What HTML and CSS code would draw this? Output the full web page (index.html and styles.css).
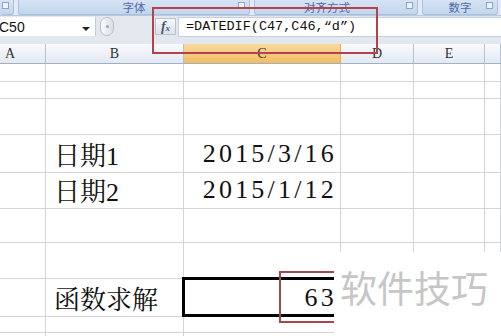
FILE: index.html
```html
<!DOCTYPE html>
<html lang="zh-CN">
<head>
<meta charset="utf-8">
<title>DATEDIF</title>
<link rel="stylesheet" href="styles.css">
</head>
<body>
<div class="screen">

	<div class="ribbon">
		<div class="group g-prev"><span class="launch"></span></div>
		<div class="group g-font"><span class="label">字体</span><span class="launch"></span></div>
		<div class="group g-align"><span class="label">对齐方式</span><span class="launch"></span></div>
		<div class="group g-num"><span class="label">数字</span><span class="launch"></span></div>
	</div>

	<div class="fbar">
		<div class="namebox"><span class="ref">C50</span><span class="arrow"></span></div>
		<div class="splitter"><span></span></div>
		<div class="fx"><i>f</i><i class="x">x</i></div>
		<div class="formula">=DATEDIF(C47,C46,“d”)</div>
	</div>

	<div class="sheet">
		<div class="row head">
			<div class="cell">A</div><div class="cell">B</div><div class="cell on">C</div><div class="cell">D</div><div class="cell">E</div><div class="cell"></div>
		</div>
		<div class="row r18">
			<div class="cell"></div><div class="cell"></div><div class="cell"></div><div class="cell"></div><div class="cell"></div><div class="cell"></div>
		</div>
		<div class="row r17">
			<div class="cell"></div><div class="cell"></div><div class="cell"></div><div class="cell"></div><div class="cell"></div><div class="cell"></div>
		</div>
		<div class="row r36">
			<div class="cell"></div><div class="cell"></div><div class="cell"></div><div class="cell"></div><div class="cell"></div><div class="cell"></div>
		</div>
		<div class="row r36">
			<div class="cell"></div><div class="cell txt">日期1</div><div class="cell num">2015/3/16</div><div class="cell"></div><div class="cell"></div><div class="cell"></div>
		</div>
		<div class="row r36">
			<div class="cell"></div><div class="cell txt">日期2</div><div class="cell num">2015/1/12</div><div class="cell"></div><div class="cell"></div><div class="cell"></div>
		</div>
		<div class="row r36">
			<div class="cell"></div><div class="cell"></div><div class="cell"></div><div class="cell"></div><div class="cell"></div><div class="cell"></div>
		</div>
		<div class="row r36">
			<div class="cell"></div><div class="cell"></div><div class="cell"></div><div class="cell"></div><div class="cell"></div><div class="cell"></div>
		</div>
		<div class="row r36">
			<div class="cell"></div><div class="cell txt">函数求解</div><div class="cell num sel">63</div><div class="cell"></div><div class="cell"></div><div class="cell"></div>
		</div>
		<div class="row r18">
			<div class="cell"></div><div class="cell"></div><div class="cell"></div><div class="cell"></div><div class="cell"></div><div class="cell"></div>
		</div>
		<div class="row rest">
			<div class="cell"></div><div class="cell"></div><div class="cell"></div><div class="cell"></div><div class="cell"></div><div class="cell"></div>
		</div>
	</div>

	<!-- red marks drawn over the screenshot -->
	<div class="mark mark-top"></div>
	<div class="mark mark-bottom"></div>

	<div class="watermark"><span>软件技巧</span></div>
</div>
</body>
</html>
```

FILE: styles.css
```css
* {
    box-sizing: border-box;
}
body {
    margin: 0;
    background: #fff;
}
.screen {
    position: relative;
    width: 501px;
    height: 336px;
    overflow: hidden;
    background: #fff;
}

/* ribbon group labels */
.ribbon {
    display: flex;
    gap: 4px;
    height: 16px;
    background: #e2eaf5;
    border-bottom: 1px solid #b9c9dd;
}
.group {
    position: relative;
    height: 15px;
    background: linear-gradient(#d6e3f3, #c3d6ee);
    border: 1px solid #a9bfdb;
    border-top: none;
    border-radius: 0 0 3px 3px;
    text-align: center;
}
.g-prev { width: 14px; border-left: none; }
.g-font { width: 232px; }
.g-align { width: 164px; }
.g-num { width: 76px; }
.label {
    display: block;
    margin-top: 1px;
    font: 11.5px/13px "Noto Sans CJK SC", sans-serif;
    color: #5069a6;
}
.g-align .label { padding-right: 18px; }
.launch {
    position: absolute;
    right: 4px;
    top: 2px;
    width: 7px;
    height: 7px;
    border: 1px solid #8ea6c6;
    background: #eef3f9;
}
.g-prev .launch { right: auto; left: 2px; }

/* formula bar */
.fbar {
    display: flex;
    align-items: flex-start;
    height: 28px;
    padding-top: 1px;
    background: #e3e8ef;
}
.namebox {
    display: flex;
    align-items: center;
    width: 96px;
    height: 19px;
    background: #fff;
    border-right: 1px solid #c3cedb;
}
.ref {
    margin-left: -1px;
    font: 14px "Liberation Sans", sans-serif;
    color: #111;
}
.arrow {
    margin: 4px 5px 0 auto;
    border-top: 4px solid #222;
    border-left: 4px solid transparent;
    border-right: 4px solid transparent;
}
.splitter {
    display: flex;
    align-items: center;
    justify-content: center;
    width: 14px;
    height: 19px;
    margin-left: 4px;
    border: 1px solid #b6c1ce;
    border-radius: 7px;
    background: linear-gradient(90deg, #fafbfd, #d8dee6);
}
.splitter span {
    width: 3px;
    height: 3px;
    border-radius: 50%;
    background: #9aa6b5;
}
.fx {
    width: 21px;
    height: 17px;
    margin: 1px 0 0 41px;
    border: 1px solid #b8c3d0;
    background: linear-gradient(#f6f8fb, #dbe1e9);
    text-align: center;
    font: bold italic 14px/15px "Liberation Serif", serif;
    color: #4b5b72;
}
.fx .x {
    font-size: 9px;
}
.formula {
    flex: 1;
    height: 20px;
    margin-left: 2px;
    padding-left: 7px;
    background: #fff;
    border: 1px solid #c4cfdb;
    border-right: none;
    font: 13.5px/18px "Liberation Mono", monospace;
    color: #111;
}

/* worksheet grid */
.row {
    display: grid;
    grid-template-columns: 46px 138px 157px 73px 71px 1fr;
}
.cell {
    display: flex;
    align-items: center;
    border-right: 1px solid #d3d5d8;
    border-bottom: 1px solid #d3d5d8;
}
.head { height: 20px; }
.head .cell {
    justify-content: center;
    background: linear-gradient(#f8fafd, #e3e9f2);
    border-right-color: #b5c2d2;
    border-bottom-color: #9fb1c7;
    font: 14px "Liberation Serif", serif;
    color: #333;
}
.head .cell:first-child { justify-content: flex-start; padding-left: 5px; }
.head .on {
    background: linear-gradient(#f9d99f, #f3bd62);
    border-right-color: #e4ad55;
}
.r18 { height: 18px; }
.r17 { height: 17px; }
.r36 { height: 36px; }
.rest { height: 10px; }

.txt,
.num {
    font: 26px "Liberation Serif", "Noto Serif CJK SC", "Noto Sans CJK SC", serif;
    color: #111;
}
.txt { padding-left: 8px; }
.num {
    justify-content: flex-end;
    padding-right: 3px;
    letter-spacing: 3.2px;
}
.sel { position: relative; }
.sel::after {
    content: "";
    position: absolute;
    top: -2px;
    left: -2px;
    right: -2px;
    bottom: -1px;
    border: 3px solid #000;
}

/* annotation marks */
.mark {
    position: absolute;
    border: 2px solid #b4424c;
}
.mark-top {
    left: 152px;
    top: 7px;
    width: 226px;
    height: 47px;
}
.mark-bottom {
    left: 279px;
    top: 271px;
    width: 90px;
    height: 52px;
    border-color: #a4484b;
}
.watermark {
    position: absolute;
    left: 334px;
    top: 252px;
    right: 0;
    bottom: 0;
    background: #fff;
    padding: 15px 0 0 6px;
}
.watermark span {
    font: 37px/40px "Noto Sans CJK SC", sans-serif;
    color: #c6c6c6;
}
```
